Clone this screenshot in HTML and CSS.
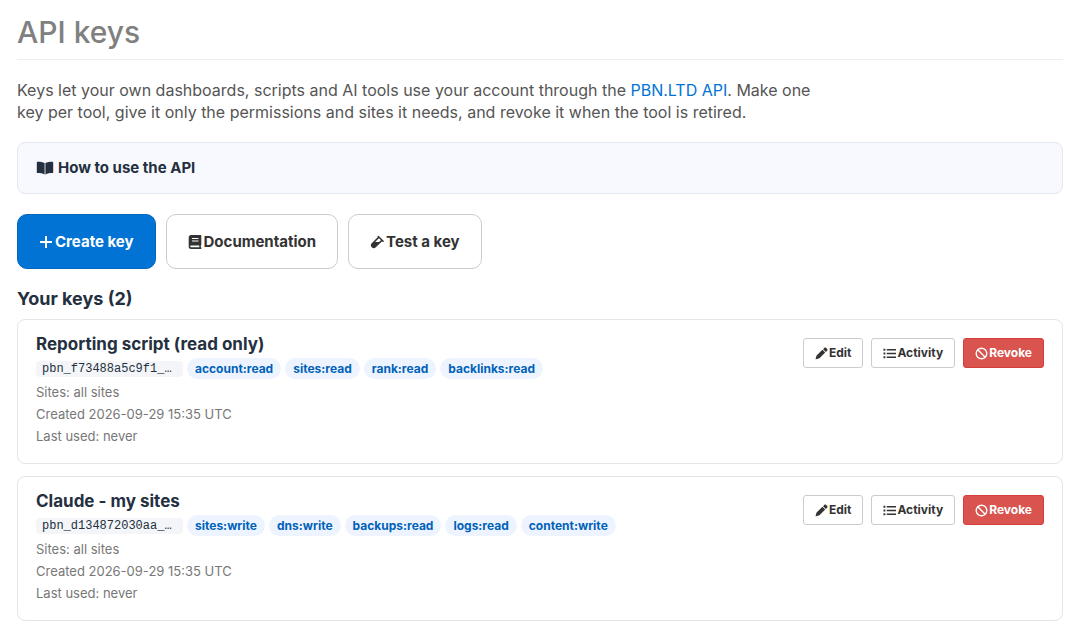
FILE: index.html
```html
<!DOCTYPE html>
<html lang="en">
<head>
	<meta charset="utf-8">
	<meta name="viewport" content="width=device-width, initial-scale=1">
	<title>API keys</title>

	<link rel="stylesheet" href="styles.css">
</head>
<body>
	<!-- shared icons -->
	<svg class="sprite" aria-hidden="true">
		<symbol id="icon-pencil" viewBox="0 0 14 14">
			<path d="M10 1c.6-.6 1.400-.6 2 0l1 1c.6.6.6 1.400 0 2l-1.300 1.300-3-3zM8 3l3 3-6.200 6.200-3.700 1.100c-.4.1-.6-.1-.5-.5l1.100-3.700z"/>
		</symbol>
		<symbol id="icon-list" viewBox="0 0 14 14">
			<path d="M.5 2h2v2h-2zM.5 6h2v2h-2zM.5 10h2v2h-2zM4 2.200h10v1.600H4zM4 6.200h10v1.600H4zM4 10.200h10v1.600H4z"/>
		</symbol>
		<symbol id="icon-ban" viewBox="0 0 14 14">
			<path d="M7 1.300a5.700 5.700 0 1 0 0 11.400A5.700 5.700 0 0 0 7 1.300zM3 3l8 8" fill="none" stroke="currentColor" stroke-width="1.500"/>
		</symbol>
	</svg>

	<main class="page">
		<h1 class="page-title">API keys</h1>

		<p class="lead">Keys let your own dashboards, scripts and AI tools use your account through the <a href="#">PBN.LTD API</a>. Make one key per tool, give it only the permissions and sites it needs, and revoke it when the tool is retired.</p>

		<details class="howto">
			<summary>
				<svg class="icon-book" viewBox="0 0 18 14" aria-hidden="true"><path d="M8.600 2v11.500C6.500 12.500 4.500 12.200 1.500 12.100c-.4 0-.7-.3-.7-.7V1.400c0-.4.3-.7.700-.7 3 0 5.300.3 7.100 1.300zM9.400 2v11.500c2.100-1 4.100-1.300 7.100-1.400.4 0 .7-.3.7-.7V1.400c0-.4-.3-.7-.7-.7-3 0-5.300.3-7.100 1.300z"/></svg>
				How to use the API
			</summary>
		</details>

		<div class="toolbar">
			<button type="button" class="btn btn-primary">
				<svg class="icon" viewBox="0 0 14 14" aria-hidden="true"><path d="M6 1h2v5h5v2H8v5H6V8H1V6h5z"/></svg>Create key
			</button>
			<a href="#" class="btn">
				<svg class="icon" viewBox="0 0 14 14" aria-hidden="true"><path fill-rule="evenodd" d="M3 0h9.500c.5 0 .8.300.8.800v9c0 .4-.2.600-.5.800v1.600h.5V14H3C1.700 14 .7 13 .7 11.700V2.300C.7 1 1.700 0 3 0zM4 3v1h6.500V3zM4 5.500v1h6.500v-1zM3 10.600a.8.800 0 0 0 0 1.600h8.300v-1.600z"/></svg>Documentation
			</a>
			<button type="button" class="btn">
				<svg class="icon" viewBox="0 0 14 14" aria-hidden="true"><path d="M8.300 1.500l4.800 4.800M8.600 2.400L2.300 8.700a2.100 2.100 0 0 0 3 3l6.600-6.300" fill="none" stroke="currentColor" stroke-width="1.500" stroke-linecap="round"/><path d="M4 7h6l-4.700 4.700a2.100 2.100 0 0 1-3-3z"/></svg>Test a key
			</button>
		</div>

		<h2 class="section-title">Your keys (2)</h2>

		<section class="key-card">
			<div class="key-info">
				<h3>Reporting script (read only)</h3>
				<div class="scopes">
					<code>pbn_f73488a5c9f1_…</code>
					<span class="scope">account:read</span>
					<span class="scope">sites:read</span>
					<span class="scope">rank:read</span>
					<span class="scope">backlinks:read</span>
				</div>
				<p>Sites: all sites</p>
				<p>Created 2026-09-29 15:35 UTC</p>
				<p>Last used: never</p>
			</div>
			<div class="key-actions">
				<button type="button" class="btn-sm"><svg class="icon-sm" aria-hidden="true"><use href="#icon-pencil"/></svg>Edit</button>
				<button type="button" class="btn-sm"><svg class="icon-sm" aria-hidden="true"><use href="#icon-list"/></svg>Activity</button>
				<button type="button" class="btn-sm btn-danger"><svg class="icon-sm" aria-hidden="true"><use href="#icon-ban"/></svg>Revoke</button>
			</div>
		</section>

		<section class="key-card">
			<div class="key-info">
				<h3>Claude - my sites</h3>
				<div class="scopes">
					<code>pbn_d134872030aa_…</code>
					<span class="scope">sites:write</span>
					<span class="scope">dns:write</span>
					<span class="scope">backups:read</span>
					<span class="scope">logs:read</span>
					<span class="scope">content:write</span>
				</div>
				<p>Sites: all sites</p>
				<p>Created 2026-09-29 15:35 UTC</p>
				<p>Last used: never</p>
			</div>
			<div class="key-actions">
				<button type="button" class="btn-sm"><svg class="icon-sm" aria-hidden="true"><use href="#icon-pencil"/></svg>Edit</button>
				<button type="button" class="btn-sm"><svg class="icon-sm" aria-hidden="true"><use href="#icon-list"/></svg>Activity</button>
				<button type="button" class="btn-sm btn-danger"><svg class="icon-sm" aria-hidden="true"><use href="#icon-ban"/></svg>Revoke</button>
			</div>
		</section>
	</main>
</body>
</html>
```
FILE: styles.css
```css
* {
	box-sizing: border-box;
}
body {
	margin: 0;

	background-color: #fff;
	color: #555;

	font-family: Inter, sans-serif;
	font-size: 15px;
	line-height: 22px;
}
h1, h2, h3, p {
	margin: 0;
}
a {
	color: #0073d5;
	text-decoration: none;
}
svg {
	fill: currentColor;
	flex: none;
}
.sprite {
	display: none;
}
.page {
	padding: 12px 19px 16px 17px;
}

.page-title {
	padding-bottom: 7px;
	border-bottom: 1px solid #eee;

	color: #808080;
	font-size: 30px;
	font-weight: 500;
	line-height: 40px;
}
.lead {
	max-width: 800px;
	margin-top: 19px;

	font-size: 16px;
}

.howto {
	margin-top: 19px;
	padding: 14px 18px;

	background-color: #f8f9fe;
	border: 1px solid #e3e7ef;
	border-radius: 8px;
}
.howto summary {
	display: flex;
	align-items: center;
	gap: 4px;

	color: #243040;
	font-weight: 700;
	cursor: pointer;
}
.icon-book {
	width: 18px;
	height: 14px;
}

.toolbar {
	display: flex;
	flex-wrap: wrap;
	gap: 10px;
	margin-top: 20px;
}
.btn {
	display: flex;
	align-items: center;
	justify-content: center;
	gap: 2px;

	height: 55px;
	padding: 0 21px;

	background-color: #fff;
	border: 1px solid #ccc;
	border-radius: 10px;

	color: #333;
	font: inherit;
	font-weight: 700;
	cursor: pointer;
}
.btn-primary {
	background-color: #0073d5;
	border-color: #0067bf;
	color: #fff;
}
.icon {
	width: 14px;
	height: 14px;
}

.section-title {
	margin: 18px 0 8px;

	color: #243040;
	font-size: 18px;
	font-weight: 700;
	line-height: 24px;
}

.key-card {
	display: flex;
	justify-content: space-between;
	align-items: flex-start;
	gap: 20px;

	margin-bottom: 12px;
	padding: 12px 18px 16px;

	border: 1px solid #e2e5e9;
	border-radius: 8px;
}
.key-info h3 {
	margin-bottom: 2px;

	color: #243040;
	font-size: 17px;
	font-weight: 700;
	line-height: 24px;
}
.key-info p {
	color: #777;
	font-size: 13px;
}
.scopes {
	display: flex;
	flex-wrap: wrap;
	align-items: center;
	gap: 4px;
	margin-bottom: 2px;
}
.scopes code {
	min-width: 147px;
	padding: 0 6px;

	background-color: #f3f5f8;
	border-radius: 4px;

	color: #243040;
	font-family: "Liberation Mono", monospace;
	font-size: 12px;
	line-height: 16px;
}
.scope {
	padding: 0 8px;

	background-color: #eef4ff;
	border-radius: 11px;

	color: #0062b8;
	font-size: 12px;
	font-weight: 700;
	line-height: 21px;
}

.key-actions {
	display: flex;
	gap: 8px;
	margin-top: 6px;
}
.btn-sm {
	display: flex;
	align-items: center;
	gap: 1px;

	height: 30px;
	padding: 0 11px;

	background-color: #fff;
	border: 1px solid #ccc;
	border-radius: 3px;

	color: #333;
	font: inherit;
	font-size: 12px;
	font-weight: 700;
	cursor: pointer;
}
.btn-danger {
	background-color: #d9534f;
	border-color: #d43f3a;
	color: #fff;
}
.icon-sm {
	width: 13px;
	height: 13px;
}
```
